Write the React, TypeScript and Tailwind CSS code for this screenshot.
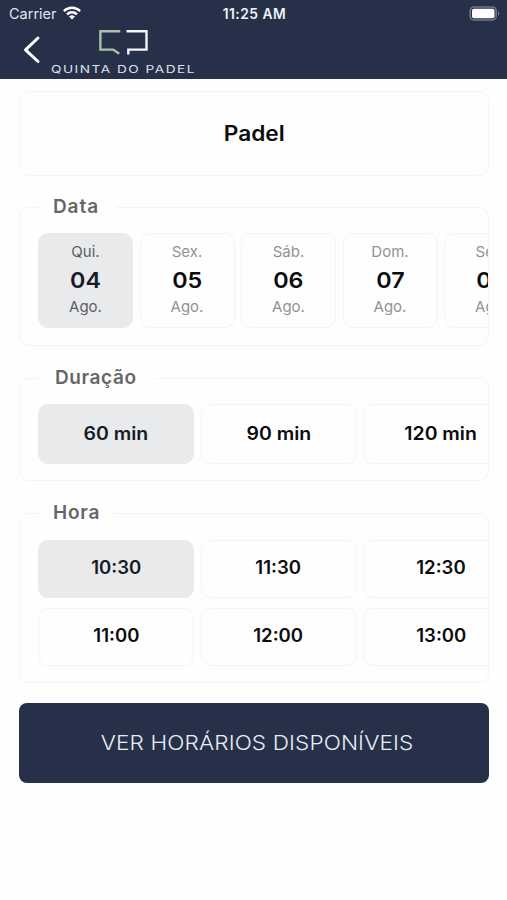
import { ReactNode, useState } from "react";
import clsx from "clsx";

const days = [
  { week: "Qui.", day: "04", month: "Ago." },
  { week: "Sex.", day: "05", month: "Ago." },
  { week: "Sáb.", day: "06", month: "Ago." },
  { week: "Dom.", day: "07", month: "Ago." },
  { week: "Seg.", day: "08", month: "Ago." },
];

const durations = ["60 min", "90 min", "120 min"];

const hours = ["10:30", "11:30", "12:30", "11:00", "12:00", "13:00"];

function StatusBar() {
  return (
    <div className="grid h-[27px] grid-cols-3 items-center pl-[9px] pr-[7px] text-[14px] leading-none">
      <div className="flex items-center gap-[6px] text-[#dfe5ee]">
        <span className="pt-px text-[14.5px]">Carrier</span>
        <svg className="-mt-0.5" width="18" height="14" viewBox="0 0 18 14" fill="none" stroke="#fff" strokeWidth="2.5">
          <path d="M0.9 5.1a11.6 11.6 0 0 1 16.2 0" />
          <path d="M4 8.3a7.2 7.2 0 0 1 10 0" />
          <path d="M9 13.6 6 10.6a4.3 4.3 0 0 1 6 0z" fill="#fff" stroke="none" />
        </svg>
      </div>
      <span className="whitespace-nowrap pt-[3px] text-center text-[13.8px] font-semibold tracking-[0.5px] text-[#eef2f7]">
        11:25 AM
      </span>
      <svg className="justify-self-end" width="31" height="15" viewBox="0 0 31 15" fill="none">
        <rect x="1.2" y="1" width="26" height="13" rx="4" stroke="#6f778c" strokeWidth="1.6" />
        <rect x="3" y="2.8" width="22.5" height="9.4" rx="2" fill="#fff" />
        <path d="M29 5.3c1.6.7 1.6 3.7 0 4.4z" fill="#7d8598" />
      </svg>
    </div>
  );
}

function Header() {
  return (
    <header className="h-[79px] bg-[#273049] text-white">
      <StatusBar />
      <div className="flex items-start pl-[22px]">
        <button aria-label="Voltar" className="mt-[8px]">
          <svg width="20" height="30" viewBox="0 0 20 30" fill="none" stroke="#fff" strokeWidth="3" strokeLinecap="round" strokeLinejoin="round">
            <path d="M16 3 3.5 14.8 16 26.5" />
          </svg>
        </button>
        <div className="ml-[10px] flex flex-col items-start pt-[2px]">
          <svg className="ml-[45px]" width="52" height="27" viewBox="0 0 52 27" fill="none" strokeWidth="2.4">
            <path d="M23.3 2.3H3.4V20.6h12.8l6 4.2" stroke="#a9c3a6" />
            <path d="M29.5 2.3h20V20.6H31.3v5" stroke="#f4f6fa" />
          </svg>
          <span className="-ml-px mt-[8px] origin-left scale-x-[1.3] whitespace-nowrap text-[10.5px] leading-[11px] tracking-[1.15px] text-[#dde2ec]">
            QUINTA DO PADEL
          </span>
        </div>
      </div>
    </header>
  );
}

function Section({ title, legendClass, children }: { title: string; legendClass: string; children: ReactNode }) {
  return (
    <fieldset className="mt-5 min-w-0 rounded-[10px] border-[1.5px] border-[#f4f4f5] pl-[18px]">
      <legend className={clsx("h-6 text-[19px] font-semibold leading-6 text-[#666]", legendClass)}>
        {title}
      </legend>
      <div className="overflow-hidden">{children}</div>
    </fieldset>
  );
}

type ChipProps = { active: boolean; className: string; onClick: () => void; children: ReactNode };

function Chip({ active, className, onClick, children }: ChipProps) {
  return (
    <button
      onClick={onClick}
      className={clsx(
        "shrink-0 rounded-[10px] border-[1.5px]",
        active ? "border-[#e9eaec] bg-[#e9eaec] text-[#171b28]" : "border-[#f4f4f5] text-[#0c0c0e]",
        className
      )}
    >
      {children}
    </button>
  );
}

export default function App() {
  const [day, setDay] = useState("04");
  const [duration, setDuration] = useState("60 min");
  const [hour, setHour] = useState("10:30");

  return (
    <div className="min-h-[900px] w-full overflow-hidden bg-[#fefefe] font-['Inter','Liberation_Sans',sans-serif]">
      <Header />
      <main className="pl-[19px] pr-[18px] pt-3">
        <div className="-mb-px flex h-[85px] items-center justify-center rounded-[10px] border-[1.5px] border-[#f4f5f6] text-[21px] font-semibold text-[#0c0c0e]">
          <span className="scale-x-[1.08]">Padel</span>
        </div>

        <Section title="Data" legendClass="ml-px pl-[14px] pr-[17px] tracking-[0.9px]">
          <div className="flex gap-[6.5px] pb-[17px] pt-[14px]">
            {days.map((d) => (
              <Chip
                key={d.day}
                active={day === d.day}
                onClick={() => setDay(d.day)}
                className="flex h-[95px] w-[95px] flex-col items-center pt-[8px]"
              >
                <span className={clsx("text-[15px] leading-5", day === d.day ? "text-[#5b5e66]" : "text-[#929294]")}>
                  {d.week}
                </span>
                <span className="mt-[3px] scale-x-[1.06] text-[22px] font-semibold leading-[30px]">{d.day}</span>
                <span className={clsx("mt-[2px] text-[15px] leading-5", day === d.day ? "text-[#5b5e66]" : "text-[#929294]")}>
                  {d.month}
                </span>
              </Chip>
            ))}
          </div>
        </Section>

        <Section title="Duração" legendClass="ml-px pl-[16px] pr-[17px] tracking-[0.6px]">
          <div className="flex gap-[6.5px] pb-4 pt-[14px]">
            {durations.map((item) => (
              <Chip
                key={item}
                active={duration === item}
                onClick={() => setDuration(item)}
                className="h-[60px] w-[156px] pb-[2px] text-[18px] font-semibold"
              >
                <span className="inline-block scale-x-[1.08]">{item}</span>
              </Chip>
            ))}
          </div>
        </Section>

        <Section title="Hora" legendClass="ml-px pl-[14px] pr-[13px] tracking-[0.8px]">
          <div className="grid grid-cols-[repeat(3,156px)] gap-x-[6.5px] gap-y-[10px] pb-4 pt-[15px]">
            {hours.map((item) => (
              <Chip
                key={item}
                active={hour === item}
                onClick={() => setHour(item)}
                className="h-[58px] pb-[4px] text-[18px] font-semibold"
              >
                <span className="inline-block scale-x-[1.03]">{item}</span>
              </Chip>
            ))}
          </div>
        </Section>

        <button className="mt-5 h-20 w-full rounded-[8px] bg-[#273049] pl-[6px] text-[20.5px] font-light text-[#e9edf3]">
          <span className="inline-block scale-x-[1.1] tracking-[0.1px]">VER HORÁRIOS DISPONÍVEIS</span>
        </button>
      </main>
    </div>
  );
}
